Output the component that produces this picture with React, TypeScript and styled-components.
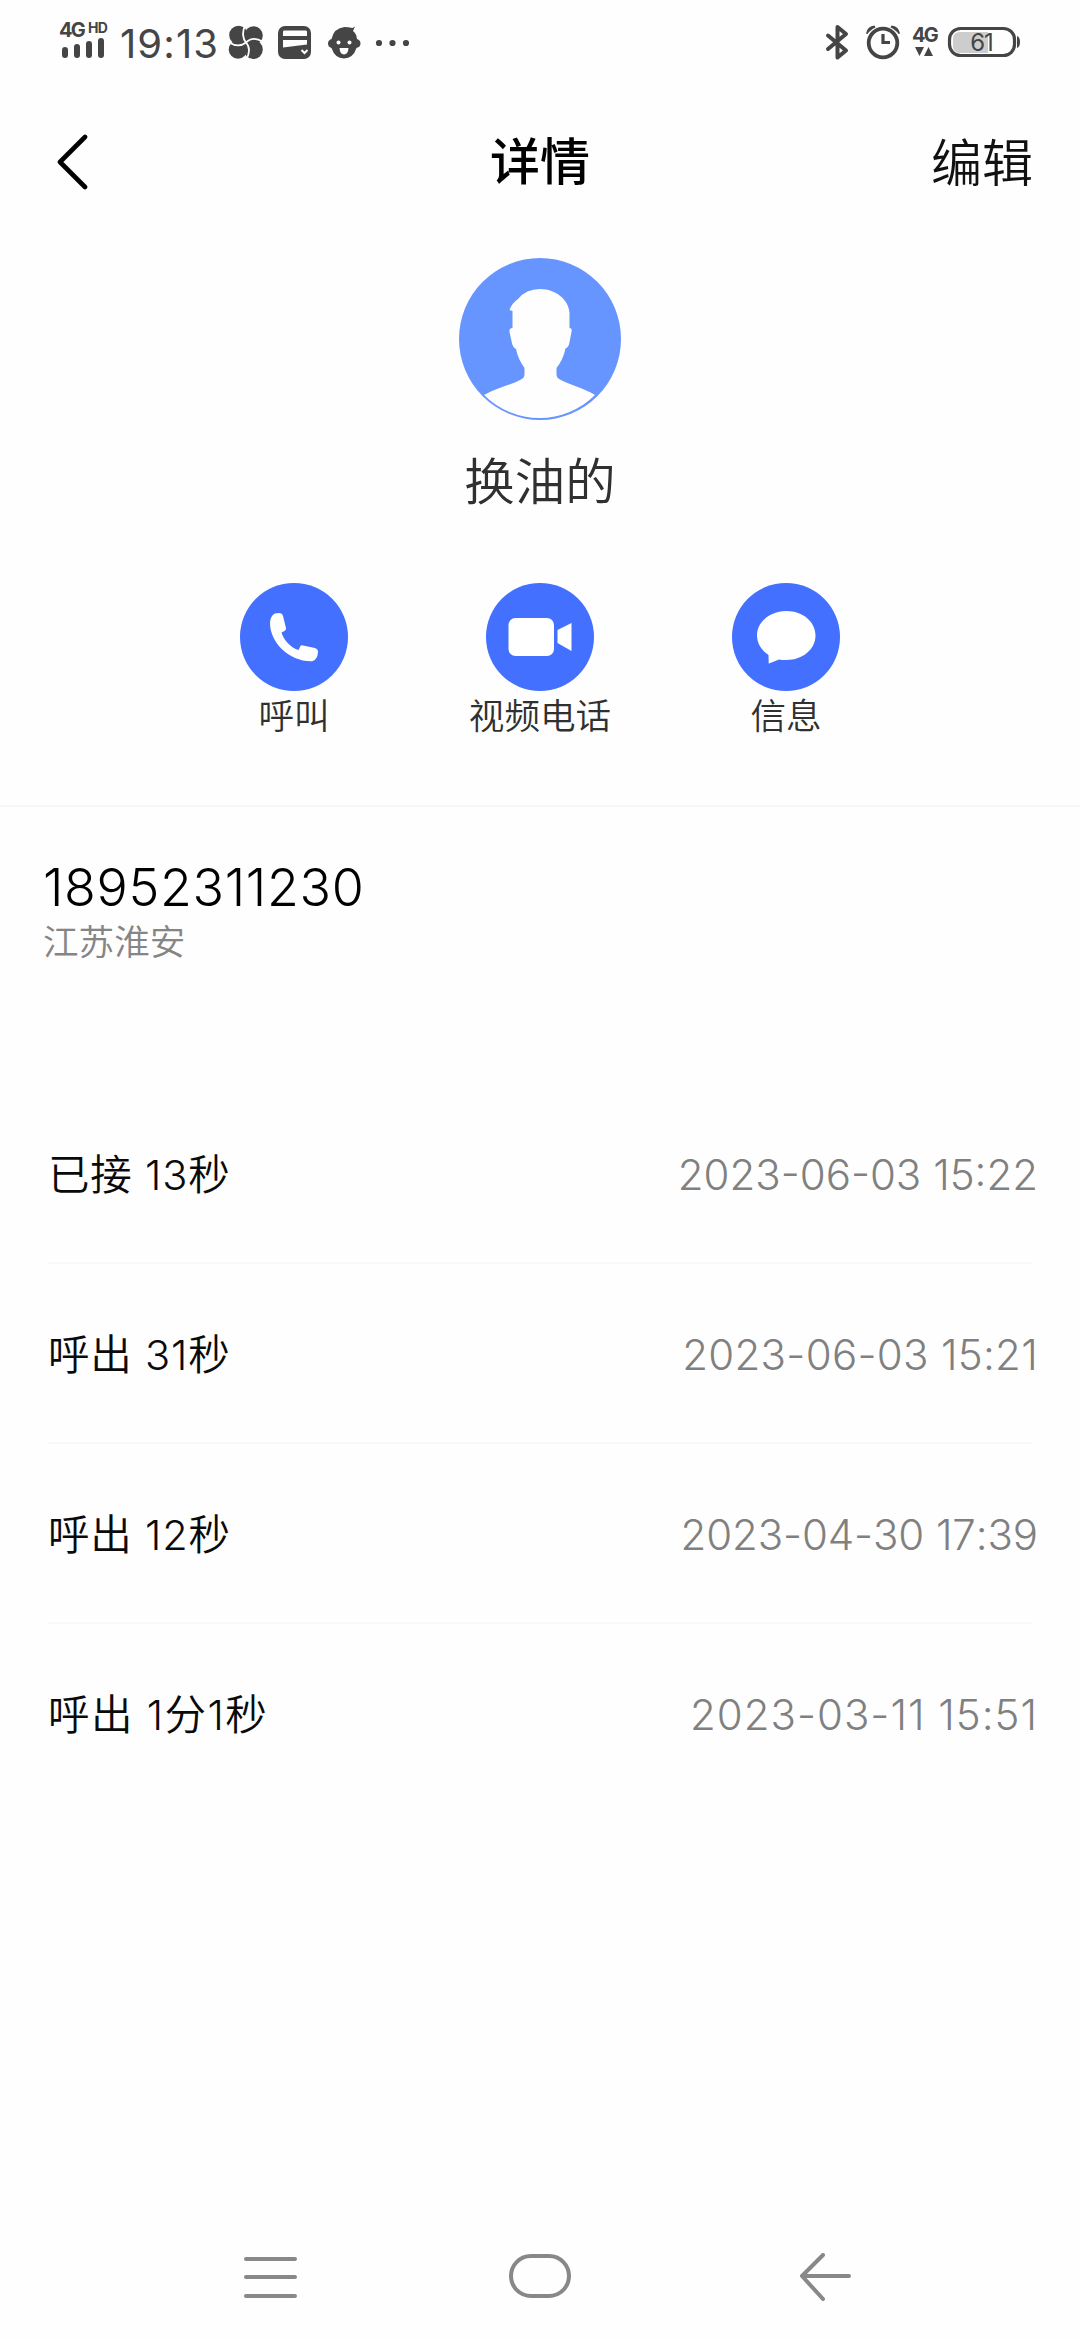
import React from "react";
import styled, { createGlobalStyle } from "styled-components";

const cjk = `"Noto Sans CJK SC", sans-serif`;
const latin = `Inter, "Noto Sans CJK SC", sans-serif`;

const GlobalStyle = createGlobalStyle`
  * { box-sizing: border-box; }
  body { margin: 0; background: #fefefe; }
`;

const Screen = styled.main`
  width: 1080px;
  height: 2340px;
  display: flex;
  flex-direction: column;
  background: #fefefe;
  color: #0a0a0a;
  font-family: ${latin};
  font-kerning: none;
  overflow: hidden;
`;

const StatusBar = styled.header`
  height: 84px;
  flex: none;
  display: flex;
  justify-content: space-between;
  align-items: flex-start;
  padding: 20px 59px 0 59px;
  color: #454545;
`;

const StatusGroup = styled.div`
  display: flex;
  height: 44px;
  align-items: center;
`;

const Slot = styled.div<{ $w: number; $gap?: number }>`
  width: ${(p) => p.$w}px;
  margin-left: ${(p) => p.$gap ?? 0}px;
  height: 44px;
  flex: none;
  display: flex;
  svg { display: block; overflow: visible; }
`;

const Network = styled(Slot)<{ $top?: number }>`
  flex-direction: column;
  padding-top: ${(p) => p.$top ?? 0}px;
`;

const NetLabel = styled.div`
  display: flex;
  height: 18px;
  font-weight: 700;
  font-size: 20px;
  line-height: 20px;
  letter-spacing: -1.8px;
`;

const NetSup = styled.span`
  font-size: 14px;
  line-height: 15px;
  letter-spacing: -0.6px;
  margin-left: 4px;
`;

const Clock = styled.time`
  width: 98px;
  margin-left: 14px;
  padding-top: 3px;
  font-size: 40px;
  line-height: 48px;
  letter-spacing: 1.1px;
  white-space: nowrap;
`;

const BatteryLevel = styled.div`
  position: relative;
  width: 73px;
  height: 32px;
  margin: 6px 0 0;
`;

const BatteryText = styled.span`
  position: absolute;
  left: 0;
  top: 1px;
  width: 67px;
  text-align: center;
  font-size: 24px;
  line-height: 31px;
  letter-spacing: -1px;
`;

const TitleBar = styled.nav`
  height: 160px;
  flex: none;
  display: grid;
  grid-template-columns: 1fr auto 1fr;
  align-items: center;
  padding: 0 47px 4px 56px;
  font-family: ${cjk};
`;

const Title = styled.h1`
  margin: 0 0 8px -9px;
  font-size: 50px;
  line-height: 60px;
  font-weight: 500;
  color: #000;
`;

const Edit = styled.button`
  justify-self: end;
  border: 0;
  margin-bottom: 4px;
  padding: 0;
  background: none;
  font: 350 51px/60px ${cjk};
  color: #111;
`;

const Profile = styled.section`
  height: 561px;
  flex: none;
  display: flex;
  flex-direction: column;
  align-items: center;
  padding-top: 14px;
`;

const Name = styled.h2`
  margin: 26px 0 5px;
  font: 350 50.5px/64px ${cjk};
  color: #303030;
`;

const Actions = styled.div`
  display: flex;
  margin-top: 68px;
`;

const Action = styled.button`
  width: 246px;
  border: 0;
  padding: 0;
  background: none;
  display: flex;
  flex-direction: column;
  align-items: center;
  font: 350 35.6px/46px ${cjk};
  color: #303030;
`;

const ActionDisc = styled.span`
  width: 108px;
  height: 108px;
  border-radius: 50%;
  background: #4370ff;
  svg { display: block; }
`;

const NumberBlock = styled.section`
  height: 279px;
  flex: none;
  padding: 50px 43px 0;
  border-top: 2px solid #f7f7f7;
`;

const PhoneNumber = styled.div`
  font-weight: 300;
  font-size: 52px;
  line-height: 62px;
  letter-spacing: 0.65px;
  color: #000;
`;

const Region = styled.div`
  margin-top: -3px;
  font: 350 35.6px/48px ${cjk};
  color: #858585;
`;

const CallList = styled.ul`
  flex: 1;
  list-style: none;
  margin: 0;
  padding: 0 48px;
`;

const CallRow = styled.li`
  height: 180px;
  display: flex;
  align-items: center;
  justify-content: space-between;
  padding-top: 3px;
  border-bottom: 2px solid #f9f9f9;
  &:last-child { border-color: transparent; }
`;

const CallKind = styled.span<{ $track: number }>`
  font-size: 41.5px;
  line-height: 60px;
  font-weight: 350;
  letter-spacing: ${(p) => p.$track}px;
`;

const CallTime = styled.time<{ $track: number }>`
  margin-right: -6px;
  font-size: 42px;
  line-height: 60px;
  font-weight: 300;
  letter-spacing: ${(p) => p.$track}px;
  color: #808080;
`;

const NavBar = styled.footer`
  height: 128px;
  flex: none;
  display: grid;
  grid-template-columns: 57px 64px 54px;
  justify-content: space-between;
  align-items: center;
  padding: 2px 227px 0 242px;
  svg { display: block; fill: none; stroke: #888; stroke-width: 4; stroke-linecap: round; stroke-linejoin: round; }
`;

const HomeKey = styled.span`
  margin-left: -8px;
`;

const calls = [
  { kind: "已接 13秒", kindTrack: 0.8, time: "2023-06-03 15:22", timeTrack: 0 },
  { kind: "呼出 31秒", kindTrack: 0.8, time: "2023-06-03 15:21", timeTrack: 0.3 },
  { kind: "呼出 12秒", kindTrack: 0.8, time: "2023-04-30 17:39", timeTrack: -0.1 },
  { kind: "呼出 1分1秒", kindTrack: 1.4, time: "2023-03-11 15:51", timeTrack: 1 },
];

const Bars = () => (
  <svg width="46" height="22" viewBox="0 0 46 22" fill="currentColor">
    <rect x="3" y="9" width="6" height="11" rx="3" />
    <rect x="15" y="6" width="6" height="14" rx="3" />
    <rect x="27" y="3" width="6" height="17" rx="3" />
    <rect x="39" y="0" width="6" height="20" rx="3" />
  </svg>
);

const Pinwheel = () => (
  <svg width="34" height="44" viewBox="0 0 34 44">
    <g fill="currentColor">
      <circle cx="9.5" cy="15" r="9.3" />
      <circle cx="24.5" cy="15.5" r="9.3" />
      <circle cx="24.3" cy="29.5" r="9.5" />
      <circle cx="9" cy="29.5" r="9.3" />
      <rect x="10" y="15" width="14" height="14" />
    </g>
    <path d="M16.500 5C12.500 12 14 19 17 22.500C22 17.500 28 18 34 22M0 22.500C6 26 12 26.500 17 22.500C21 27 21 33 17 40" fill="none" stroke="#fefefe" strokeWidth="1.8" />
  </svg>
);

const Card = () => (
  <svg width="34" height="44" viewBox="0 0 34 44">
    <rect x="0" y="6" width="33" height="33" rx="7" fill="currentColor" />
    <path d="M6 10.500H28Q29 10.500 29 12V16H5V12Q5 10.500 6 10.500ZM5 20H29V24.500L5 27.500Z" fill="#fefefe" />
    <path d="M23.500 30L26.500 33L29.500 30" fill="none" stroke="#fefefe" strokeWidth="2" />
  </svg>
);

const Baby = () => (
  <svg width="33" height="44" viewBox="0 0 33 44">
    <path d="M25 11L27 6.500L24.500 8Q20 7 16.500 7Q6 8 3.500 19Q0 20 0 23.500Q0 27 3.500 28Q7 38.500 16 38.500Q25 38.500 28.500 28Q32.500 27 32.500 23.500Q32.500 20 29 19Q28.500 13.500 25 11Z" fill="currentColor" />
    <circle cx="10.500" cy="22.500" r="2" fill="#fefefe" />
    <circle cx="21.500" cy="22.500" r="2" fill="#fefefe" />
    <path d="M11.500 28H20.500Q20 34.500 16 34.500Q12 34.500 11.500 28Z" fill="#fefefe" />
  </svg>
);

const Dots = () => (
  <svg width="33" height="44" viewBox="0 0 33 44" fill="currentColor">
    <circle cx="3" cy="23" r="3.100" /><circle cx="16.500" cy="23" r="3.100" /><circle cx="30" cy="23" r="3.100" />
  </svg>
);

const Bluetooth = () => (
  <svg width="22" height="44" viewBox="0 0 22 44" fill="none" stroke="currentColor" strokeWidth="4" strokeLinejoin="round" strokeLinecap="round">
    <path d="M2 15.500L20 30.500L11.500 37.500V7L20 14L2 29" />
  </svg>
);

const Alarm = () => (
  <svg width="34" height="44" viewBox="0 0 34 44" fill="none" stroke="currentColor">
    <circle cx="17" cy="23" r="14.300" strokeWidth="3.800" />
    <path d="M17 14V22.500H24" strokeWidth="3.200" />
    <path d="M0 13.500Q1.500 6 8.500 5.500L9.500 7.500Q4 10 1.500 14ZM34 13.500Q32.500 6 25.500 5.500L24.500 7.500Q30 10 32.500 14Z" fill="currentColor" stroke="none" />
  </svg>
);

const BatteryShell = () => (
  <svg width="73" height="32" viewBox="0 0 73 32">
    <path d="M12 6H40V27H12Q5 27 5 20V13Q5 6 12 6Z" fill="#cdcdcd" />
    <rect x="1.500" y="2.500" width="65" height="27" rx="11" fill="none" stroke="currentColor" strokeWidth="3.200" />
    <path d="M69 10Q72 11 72 16Q72 21 69 22Z" fill="currentColor" />
  </svg>
);

const Avatar = () => (
  <svg width="162" height="162" viewBox="0 0 162 162">
    <circle cx="81" cy="81" r="81" fill="#6795ff" />
    <path d="M25 137C37 130 52 127 62 121.500Q65.500 120 65.500 116V110Q59 101 57 91Q53.500 89.500 52.500 83L50.500 74Q50 70 53.500 70V53L50.500 52Q53 45 59 41Q67 31 81 31C97 31 110 42 110.500 55V70Q113.500 70 112.500 74L110.500 84Q110 89 106.500 90.500Q104 102 97.500 110V116Q97.500 120 101 121.500C111 127 125 130 136 137A78.500 78.500 0 0 1 25 137Z" fill="#fefefe" />
  </svg>
);

const PhoneGlyph = () => (
  <svg width="108" height="108" viewBox="0 0 108 108" fill="#fff">
    <path d="M35 30.500Q42 28.500 43 33L46 45Q46.300 47 44.500 48L41.500 49.500C43.500 57 51 65 58.500 67L60.500 63Q61 62 63 62.500L75 65Q78 66 78 69Q77.500 77 72 78.200C50 79 30 60 30 40Q30.500 32.500 35 30.500Z" />
  </svg>
);

const VideoGlyph = () => (
  <svg width="108" height="108" viewBox="0 0 108 108" fill="#fff">
    <rect x="22.500" y="35" width="45.500" height="38" rx="7" />
    <path d="M71.500 47L85.500 40V68L71.500 60Z" />
  </svg>
);

const MessageGlyph = () => (
  <svg width="108" height="108" viewBox="0 0 108 108" fill="#fff">
    <path d="M54.500 28C71 28 83.500 39 83.500 52.500C83.500 66 71 77 54.500 77Q50 77 47 76.500L37 80.500Q36.500 80.500 36.700 79.500L36.500 72Q25 64 25 52.500C25 39 38 28 54.500 28Z" />
  </svg>
);

const actions = [
  { label: "呼叫", icon: <PhoneGlyph /> },
  { label: "视频电话", icon: <VideoGlyph /> },
  { label: "信息", icon: <MessageGlyph /> },
];

export default function App() {
  return (
    <Screen lang="zh-CN">
      <GlobalStyle />
      <StatusBar>
        <StatusGroup>
          <Network $w={47}>
            <NetLabel>4G<NetSup>HD</NetSup></NetLabel>
            <Bars />
          </Network>
          <Clock>19:13</Clock>
          <Slot $w={34} $gap={11}><Pinwheel /></Slot>
          <Slot $w={34} $gap={15}><Card /></Slot>
          <Slot $w={33} $gap={16}><Baby /></Slot>
          <Slot $w={33} $gap={15}><Dots /></Slot>
        </StatusGroup>
        <StatusGroup>
          <Slot $w={22}><Bluetooth /></Slot>
          <Slot $w={34} $gap={18}><Alarm /></Slot>
          <Network $w={24} $gap={12} $top={5}>
            <NetLabel>4G</NetLabel>
            <svg width="24" height="14" viewBox="0 0 24 14" fill="currentColor">
              <path d="M3 4H12L7.500 13ZM12 13H21L16.500 4Z" />
            </svg>
          </Network>
          <Slot $w={73} $gap={12}>
            <BatteryLevel>
              <BatteryShell />
              <BatteryText>61</BatteryText>
            </BatteryLevel>
          </Slot>
        </StatusGroup>
      </StatusBar>

      <TitleBar>
        <svg width="34" height="56" viewBox="0 0 34 56" fill="none" stroke="#000" strokeWidth="4.600" strokeLinecap="round" strokeLinejoin="round">
          <path d="M29 3L4 28L29 53" />
        </svg>
        <Title>详情</Title>
        <Edit>编辑</Edit>
      </TitleBar>

      <Profile>
        <Avatar />
        <Name>换油的</Name>
        <Actions>
          {actions.map((a) => (
            <Action key={a.label}>
              <ActionDisc>{a.icon}</ActionDisc>
              {a.label}
            </Action>
          ))}
        </Actions>
      </Profile>

      <NumberBlock>
        <PhoneNumber>18952311230</PhoneNumber>
        <Region>江苏淮安</Region>
      </NumberBlock>

      <CallList>
        {calls.map((c) => (
          <CallRow key={c.time}>
            <CallKind $track={c.kindTrack}>{c.kind}</CallKind>
            <CallTime $track={c.timeTrack}>{c.time}</CallTime>
          </CallRow>
        ))}
      </CallList>

      <NavBar>
        <svg width="57" height="48" viewBox="0 0 57 48"><path d="M4 6H53M4 24H53M4 43H53" /></svg>
        <HomeKey>
          <svg width="64" height="48" viewBox="0 0 64 48"><rect x="2" y="3" width="58" height="40" rx="20" /></svg>
        </HomeKey>
        <svg width="54" height="48" viewBox="0 0 54 48"><path d="M24 2L3 23L24 46M3 23H50" /></svg>
      </NavBar>
    </Screen>
  );
}
